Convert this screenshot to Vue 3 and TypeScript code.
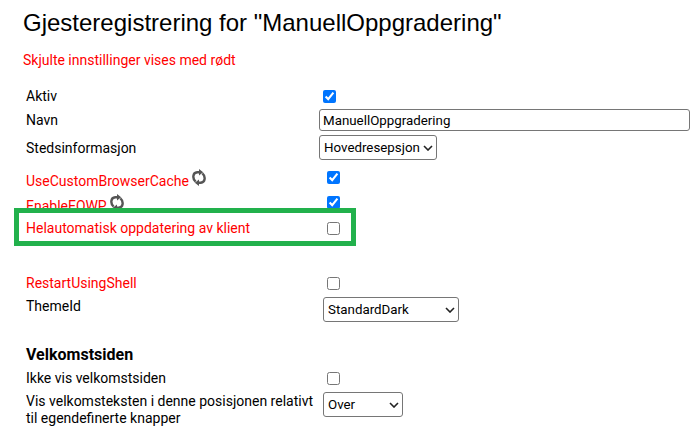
<script setup lang="ts">
import { ref } from 'vue'

const title = 'Gjesteregistrering for "ManuellOppgradering"'

const active = ref(true)
const name = ref('ManuellOppgradering')
const place = ref('Hovedresepsjon')
const hidden = ref([
  { id: 'customCache', label: 'UseCustomBrowserCache', value: true },
  { id: 'enableEqwp', label: 'EnableEQWP', value: true },
])
const autoUpdate = ref(false)
const restartShell = ref(false)
const theme = ref('StandardDark')
const hideWelcome = ref(false)
const position = ref('Over')
</script>

<template>
  <main class="page">
    <h1>{{ title }}</h1>
    <p class="notice">Skjulte innstillinger vises med rødt</p>

    <form class="settings" @submit.prevent>
      <section class="general">
        <div class="row">
          <label for="active">Aktiv</label>
          <div class="field"><input id="active" v-model="active" type="checkbox" /></div>
        </div>
        <div class="row middle">
          <label for="name">Navn</label>
          <input id="name" v-model="name" class="text" type="text" />
        </div>
        <div class="row middle">
          <label for="place">Stedsinformasjon</label>
          <div class="field">
            <div class="dropdown">
              <select id="place" v-model="place">
                <option>Hovedresepsjon</option>
              </select>
              <svg class="chevron tight" viewBox="0 0 10 6" aria-hidden="true"><path d="M1 1L5 5L9 1" /></svg>
            </div>
          </div>
        </div>
      </section>

      <section class="advanced">
        <div class="restarting">
          <div v-for="item in hidden" :key="item.id" class="row">
            <label class="secret" :for="item.id">
              {{ item.label }}
              <svg class="refresh" viewBox="0 0 14 17" aria-hidden="true">
                <g fill="none" stroke="#555" stroke-width="2.4">
                  <path d="M3.6 12.6C.2 9.6.6 3.6 5.2 3.3H8" />
                  <path d="M10.4 4.4C13.8 7.4 13.4 13.4 8.8 13.7H6" />
                </g>
                <path fill="#555" d="M7 0L11.2 3.3L7 6.4ZM7 10.6V17L2.8 13.7Z" />
              </svg>
            </label>
            <div class="field"><input :id="item.id" v-model="item.value" type="checkbox" /></div>
          </div>
        </div>
        <div class="row highlighted">
          <label class="secret" for="autoUpdate">Helautomatisk oppdatering av klient</label>
          <div class="field"><input id="autoUpdate" v-model="autoUpdate" type="checkbox" /></div>
        </div>
        <div class="row">
          <label class="secret" for="restartShell">RestartUsingShell</label>
          <div class="field"><input id="restartShell" v-model="restartShell" type="checkbox" /></div>
        </div>
        <div class="row">
          <label for="theme">ThemeId</label>
          <div class="field">
            <div class="dropdown">
              <select id="theme" v-model="theme" class="wide">
                <option>StandardDark</option>
              </select>
              <svg class="chevron" viewBox="0 0 10 6" aria-hidden="true"><path d="M1 1L5 5L9 1" /></svg>
            </div>
          </div>
        </div>
      </section>

      <section class="advanced welcome">
        <h2>Velkomstsiden</h2>
        <div class="row">
          <label for="hideWelcome">Ikke vis velkomstsiden</label>
          <div class="field"><input id="hideWelcome" v-model="hideWelcome" type="checkbox" /></div>
        </div>
        <div class="row">
          <label for="position">Vis velkomsteksten i denne posisjonen relativt til egendefinerte knapper</label>
          <div class="field">
            <div class="dropdown">
              <select id="position" v-model="position" class="narrow">
                <option>Over</option>
                <option>Under</option>
              </select>
              <svg class="chevron" viewBox="0 0 10 6" aria-hidden="true"><path d="M1 1L5 5L9 1" /></svg>
            </div>
          </div>
        </div>
      </section>
    </form>
  </main>
</template>

<style>
body {
  margin: 0;
  background: #fff;
}
</style>

<style scoped>
.page {
  box-sizing: border-box;
  padding: 8px 4px 0 23px;
  color: #000;
  font: 14px/17px Roboto, sans-serif;
}
h1 {
  margin: 0;
  font: 24px/30px "Liberation Sans", Arial, sans-serif;
}
.notice {
  margin: 14px 0 18px;
  color: #f00;
}
.settings {
  padding-left: 3px;
}
.row {
  position: relative;
  display: grid;
  grid-template-columns: 293px 1fr;
  align-items: start;
  min-height: 22px;
}
.middle {
  align-items: center;
}
.middle + .middle {
  margin-top: 4px;
}
.advanced .row {
  grid-template-columns: 297px 1fr;
  min-height: 23px;
}
label {
  padding-top: 1px;
}
.field {
  display: flex;
}
.secret {
  color: #f00;
}
input[type='checkbox'] {
  width: 13px;
  height: 13px;
  margin: 3px 4px 0;
}
.text,
select {
  box-sizing: border-box;
  border: 1px solid #767676;
  border-radius: 3px;
  background: #fff;
  color: #000;
  font-family: Roboto, sans-serif;
}
.text {
  width: 100%;
  height: 22px;
  padding: 0 3px;
}
.dropdown {
  position: relative;
}
select {
  display: block;
  appearance: none;
  width: 118px;
  height: 25px;
  padding: 0 4px;
}
.wide {
  width: 136px;
}
.narrow {
  width: 80px;
}
.chevron {
  position: absolute;
  top: 10px;
  right: 4px;
  width: 10px;
  height: 6px;
  fill: none;
  stroke: #222;
  stroke-width: 1.6;
  pointer-events: none;
}
.general {
  margin-bottom: 8px;
}
.restarting {
  margin-bottom: 1px;
}
.restarting .row {
  min-height: 25px;
}
.restarting label {
  display: flex;
  gap: 3px;
  padding-top: 5px;
}
.refresh {
  width: 14px;
  height: 17px;
  margin-top: -4px;
}
.highlighted {
  margin-bottom: 32px;
}
.highlighted::after {
  content: '';
  position: absolute;
  box-sizing: border-box;
  top: -11px;
  left: -12px;
  width: 342px;
  height: 38px;
  border: 5px solid #22b14c;
  pointer-events: none;
}
.welcome {
  margin-top: 23px;
}
h2 {
  margin: 0 0 4px;
  font-size: 16px;
  line-height: 20px;
}
.welcome label {
  padding-right: 8px;
}
</style>
